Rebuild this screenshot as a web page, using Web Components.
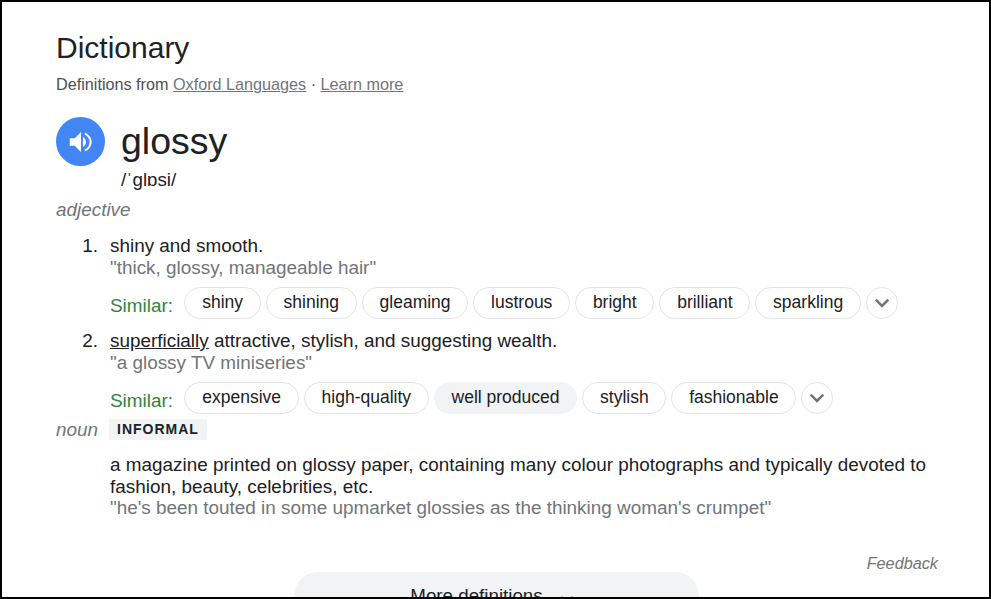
<!DOCTYPE html>
<html>
<head>
<meta charset="utf-8">
<title>Dictionary</title>
<style>
  html, body { margin: 0; padding: 0; background: #fff; }
  body { font-family: "Liberation Sans", Arial, sans-serif; color: #202124; }
</style>
</head>
<body>
<dict-card>
  <dict-source></dict-source>
  <dict-word word="glossy" phonetic="/ˈɡlɒsi/"></dict-word>
  <div style="font-style:italic;font-size:18.9px;line-height:22px;color:#70757a;margin-top:8px">adjective</div>
  <dict-sense num="1." example="&quot;thick, glossy, manageable hair&quot;" style="margin-top:14px">
    shiny and smooth.
    <similar-row slot="similar">
      <sim-chip>shiny</sim-chip>
      <sim-chip>shining</sim-chip>
      <sim-chip>gleaming</sim-chip>
      <sim-chip>lustrous</sim-chip>
      <sim-chip>bright</sim-chip>
      <sim-chip>brilliant</sim-chip>
      <sim-chip>sparkling</sim-chip>
    </similar-row>
  </dict-sense>
  <dict-sense num="2." example="&quot;a glossy TV miniseries&quot;" style="margin-top:11.5px">
    <u>superficially</u> attractive, stylish, and suggesting wealth.
    <similar-row slot="similar">
      <sim-chip>expensive</sim-chip>
      <sim-chip>high-quality</sim-chip>
      <sim-chip active>well produced</sim-chip>
      <sim-chip>stylish</sim-chip>
      <sim-chip>fashionable</sim-chip>
    </similar-row>
  </dict-sense>
  <noun-sense></noun-sense>
  <dict-footer></dict-footer>
</dict-card>

<script>
class DictCard extends HTMLElement {
  constructor() {
    super();
    this.attachShadow({ mode: "open" });
    this.shadowRoot.innerHTML = `
    <style>
      :host {
        display: block;
        box-sizing: border-box;
        width: 991px;
        height: 599px;
        border: 2px solid #000;
        padding: 28px 0 0 54px;
        overflow: hidden;
        background: #fff;
      }
      h2 {
        margin: 0;
        font-size: 30px;
        font-weight: 400;
        line-height: 36px;
      }
    </style>
    <h2>Dictionary</h2>
    <slot></slot>
    `;
  }
}

class DictSource extends HTMLElement {
  constructor() {
    super();
    this.attachShadow({ mode: "open" });
    this.shadowRoot.innerHTML = `
    <style>
      :host {
        display: block;
        margin-top: 7px;
        font-size: 16.2px;
        line-height: 22px;
        color: #4d5156;
      }
      a { color: #70757a; text-decoration: underline; }
    </style>
    Definitions from <a>Oxford Languages</a> · <a>Learn more</a>
    `;
  }
}

class DictWord extends HTMLElement {
  constructor() {
    super();
    this.attachShadow({ mode: "open" });
    this.shadowRoot.innerHTML = `
    <style>
      :host {
        display: grid;
        grid-template-columns: 49px auto;
        column-gap: 16px;
        justify-content: start;
        margin-top: 22px;
      }
      .play {
        width: 49px;
        height: 49px;
        border-radius: 50%;
        background: #4285f4;
        display: flex;
        align-items: center;
        justify-content: center;
      }
      .word {
        font-size: 37.5px;
        line-height: 49px;
      }
      .phon {
        grid-column: 2;
        margin-top: 3px;
        font-size: 18.75px;
        line-height: 22px;
      }
    </style>
    <div class="play">
      <svg width="30" height="30" viewBox="0 0 24 24" fill="#fff">
        <path d="M3 9v6h4l5 5V4L7 9H3z"/>
        <path d="M13.5 7.97v8.05c1.48-.73 2.5-2.25 2.5-4.02s-1.02-3.29-2.5-4.03z"/>
        <path d="M15 4.5v1.6c2.4 1 3.9 3.3 3.9 5.9s-1.5 4.9-3.9 5.9v1.6c3.3-1.1 5.5-4 5.5-7.5s-2.2-6.4-5.5-7.5z"/>
      </svg>
    </div>
    <div class="word"></div>
    <div class="phon"></div>
    `;
  }

  connectedCallback() {
    this.shadowRoot.querySelector(".word").textContent = this.getAttribute("word");
    this.shadowRoot.querySelector(".phon").textContent = this.getAttribute("phonetic");
  }
}

class DictSense extends HTMLElement {
  constructor() {
    super();
    this.attachShadow({ mode: "open" });
    this.shadowRoot.innerHTML = `
    <style>
      :host {
        display: grid;
        grid-template-columns: 54px auto;
        justify-content: start;
        font-size: 18.9px;
        line-height: 21.5px;
      }
      .num {
        text-align: right;
        padding-right: 12px;
        box-sizing: border-box;
      }
      .ex { color: #70757a; }
      .sim { margin: 8.5px 0 0 0; }
    </style>
    <div class="num"></div>
    <div>
      <div><slot></slot></div>
      <div class="ex"></div>
      <div class="sim"><slot name="similar"></slot></div>
    </div>
    `;
  }

  connectedCallback() {
    this.shadowRoot.querySelector(".num").textContent = this.getAttribute("num");
    this.shadowRoot.querySelector(".ex").textContent = this.getAttribute("example");
  }
}

class SimilarRow extends HTMLElement {
  constructor() {
    super();
    this.attachShadow({ mode: "open" });
    this.shadowRoot.innerHTML = `
    <style>
      :host {
        display: flex;
        align-items: center;
        gap: 5px;
      }
      .label {
        color: #2f8540;
        font-size: 18.9px;
        margin: 6px 6.5px 0 0;
      }
      .more {
        box-sizing: border-box;
        width: 32px;
        height: 32px;
        border: 1.5px solid #e3e4e7;
        border-radius: 50%;
        display: flex;
        align-items: center;
        justify-content: center;
      }
    </style>
    <span class="label">Similar:</span>
    <slot></slot>
    <span class="more">
      <svg width="16" height="16" viewBox="0 0 14 14" fill="none" stroke="#70757a" stroke-width="2.2">
        <path d="M1.5 4L7 9.5 12.5 4"/>
      </svg>
    </span>
    `;
  }
}

class SimChip extends HTMLElement {
  constructor() {
    super();
    this.attachShadow({ mode: "open" });
    this.shadowRoot.innerHTML = `
    <style>
      :host {
        display: block;
        box-sizing: border-box;
        height: 32px;
        padding: 0 16.75px;
        border: 1.5px solid #e3e4e7;
        border-radius: 16px;
        font-size: 17.5px;
        line-height: 28px;
        white-space: nowrap;
      }
      :host([active]) {
        background: #f1f3f4;
        border-color: #f1f3f4;
      }
    </style>
    <slot></slot>
    `;
  }
}

class NounSense extends HTMLElement {
  constructor() {
    super();
    this.attachShadow({ mode: "open" });
    this.shadowRoot.innerHTML = `
    <style>
      :host {
        display: block;
        font-size: 18.9px;
        line-height: 21.5px;
      }
      .head {
        display: flex;
        align-items: center;
        gap: 11px;
        margin-top: 5px;
      }
      .pos { font-style: italic; color: #70757a; }
      .tag {
        background: #f1f3f4;
        border-radius: 2px;
        padding: 0 8px;
        font-size: 14px;
        font-weight: 700;
        letter-spacing: 1px;
        line-height: 21px;
      }
      .body {
        width: 830px;
        margin: 14px 0 0 54px;
      }
      .ex { color: #70757a; }
    </style>
    <div class="head"><span class="pos">noun</span><span class="tag">INFORMAL</span></div>
    <div class="body">
      a magazine printed on glossy paper, containing many colour photographs and typically devoted to fashion, beauty, celebrities, etc.
      <div class="ex">"he's been touted in some upmarket glossies as the thinking woman's crumpet"</div>
    </div>
    `;
  }
}

class DictFooter extends HTMLElement {
  constructor() {
    super();
    this.attachShadow({ mode: "open" });
    this.shadowRoot.innerHTML = `
    <style>
      :host {
        display: block;
        margin-top: 35px;
      }
      .fb {
        width: 882px;
        text-align: right;
        font-size: 16.25px;
        font-style: italic;
        line-height: 18.5px;
        color: #70757a;
      }
      .pill {
        box-sizing: border-box;
        width: 405px;
        height: 48px;
        margin: 0 0 0 238px;
        border-radius: 24px;
        background: #f1f3f4;
        display: flex;
        justify-content: center;
        gap: 16px;
        padding: 13px 8px 0 0;
        font-size: 18.75px;
        line-height: 22px;
      }
      svg { margin-top: 7px; }
    </style>
    <div class="fb">Feedback</div>
    <div class="pill">More definitions
      <svg width="16" height="16" viewBox="0 0 14 14" fill="none" stroke="#202124" stroke-width="2">
        <path d="M2 4.5l5 5 5-5"/>
      </svg>
    </div>
    `;
  }
}

customElements.define("dict-card", DictCard);
customElements.define("dict-source", DictSource);
customElements.define("dict-word", DictWord);
customElements.define("dict-sense", DictSense);
customElements.define("similar-row", SimilarRow);
customElements.define("sim-chip", SimChip);
customElements.define("noun-sense", NounSense);
customElements.define("dict-footer", DictFooter);
</script>
</body>
</html>
